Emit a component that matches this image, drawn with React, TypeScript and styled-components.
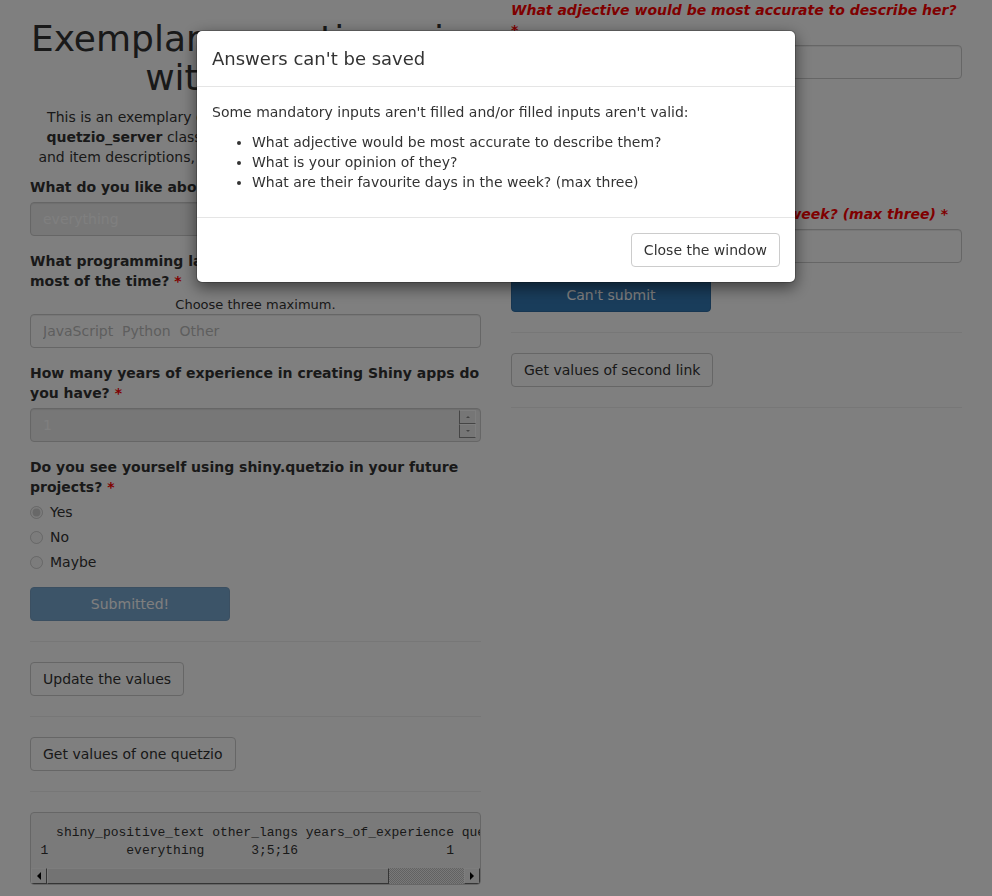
import React from "react";
import styled, { createGlobalStyle } from "styled-components";

const GlobalStyle = createGlobalStyle`
  * { box-sizing: border-box; }
  html, body { margin: 0; padding: 0; overflow: hidden; }
  body {
    font-family: "DejaVu Sans", "Noto Sans", sans-serif;
    font-size: 14px;
    line-height: 1.42857143;
    color: #333;
    background: #fff;
  }
`;

const Page = styled.div`
  display: grid;
  grid-template-columns: 1fr 1fr;
  padding: 0 15px;
`;

const Column = styled.div`
  padding: 0 15px;
  min-width: 0;
`;

const Title = styled.h1`
  margin: 20px 0 10px;
  font-size: 36px;
  font-weight: 500;
  line-height: 38.5px;
  text-align: center;
  color: #333;
`;

const Intro = styled.p`
  margin: 0 0 10px;
  text-align: center;
`;

const FormGroup = styled.div`
  margin-bottom: 15px;
`;

const Label = styled.label<{ $invalid?: boolean }>`
  display: block;
  margin-bottom: 5px;
  font-weight: 700;
  ${(p) => (p.$invalid ? "color: #f00; font-style: italic;" : "color: #333;")}
`;

const Star = styled.span`
  color: #f00;
`;

const Help = styled.div`
  font-size: 13px;
  line-height: 18px;
  text-align: center;
  color: #333;
`;

const TextInput = styled.input<{ $muted?: boolean }>`
  display: block;
  width: 100%;
  height: 34px;
  padding: 6px 12px;
  font-family: inherit;
  font-size: 14px;
  line-height: 1.42857143;
  color: ${(p) => (p.$muted ? "#bdbdbd" : "#555")};
  background: #fff;
  border: 1px solid #ccc;
  border-radius: 4px;
  box-shadow: inset 0 1px 1px rgba(0, 0, 0, 0.075);
  white-space: pre;
  &:disabled {
    background: #eee;
    color: #fff;
    -webkit-text-fill-color: #fff;
    opacity: 1;
  }
`;

const NumberWrap = styled.div`
  position: relative;
`;

const Spinner = styled.div`
  position: absolute;
  right: 5px;
  top: 2px;
  display: flex;
  flex-direction: column;
`;

const SpinButton = styled.div`
  width: 17px;
  height: 14px;
  background: #ededed;
  border: 1px solid;
  border-color: #fdfdfd #fdfdfd #8a8a8a #8a8a8a;
  display: flex;
  align-items: center;
  justify-content: center;
`;

const SpinArrow = styled.span<{ $up?: boolean }>`
  width: 0;
  height: 0;
  border-left: 2px solid transparent;
  border-right: 2px solid transparent;
  ${(p) => (p.$up ? "border-bottom: 2px solid #888;" : "border-top: 2px solid #888;")}
`;

const RadioList = styled.div`
  display: flex;
  flex-direction: column;
  gap: 5px;
`;

const RadioRow = styled.label`
  display: flex;
  align-items: flex-start;
  line-height: 20px;
  font-weight: 400;
  color: #333;
`;

const RadioInput = styled.input`
  width: 13px;
  height: 13px;
  margin: 4px 7px 0 0;
  flex: none;
`;

const Button = styled.button<{ $primary?: boolean; $dim?: boolean; $width?: number }>`
  display: inline-block;
  height: 34px;
  padding: 6px 12px;
  font-family: inherit;
  font-size: 14px;
  line-height: 1.42857143;
  text-align: center;
  white-space: nowrap;
  border: 1px solid;
  border-radius: 4px;
  ${(p) =>
    p.$primary
      ? "color: #fff; background: #337ab7; border-color: #2e6da4;"
      : "color: #333; background: #fff; border-color: #ccc;"}
  ${(p) => (p.$dim ? "opacity: 0.65;" : "")}
  ${(p) => (p.$width ? `width: ${p.$width}px;` : "")}
`;

const Rule = styled.hr`
  margin: 20px 0;
  border: 0;
  border-top: 1px solid #eee;
`;

const OutputBox = styled.div`
  border: 1px solid #ccc;
  border-radius: 4px;
  background: #f5f5f5;
  overflow: hidden;
`;

const OutputText = styled.pre`
  margin: 0;
  padding: 10.5px 9.5px 7px;
  font-family: "Liberation Mono", "DejaVu Sans Mono", monospace;
  font-size: 13px;
  line-height: 1.42857143;
  color: #333;
  white-space: pre;
  overflow: hidden;
`;

const ScrollBar = styled.div`
  display: flex;
  height: 16px;
  background: repeating-conic-gradient(#c4c4c4 0 25%, #f2f2f2 0 50%) 0 0 / 2px 2px;
`;

const ScrollButton = styled.div`
  width: 16px;
  flex: none;
  background: #f0f0f0;
  border: 1px solid;
  border-color: #fbfbfb #6a6a6a #6a6a6a #fbfbfb;
  display: flex;
  align-items: center;
  justify-content: center;
`;

const ScrollThumb = styled.div<{ $w: number }>`
  width: ${(p) => p.$w}px;
  flex: none;
  background: #e6e6e6;
  border: 1px solid;
  border-color: #fbfbfb #6a6a6a #6a6a6a #fbfbfb;
`;

const ScrollSpace = styled.div`
  flex: 1;
`;

const Arrow = styled.span<{ $dir: "left" | "right" }>`
  width: 0;
  height: 0;
  border-top: 4px solid transparent;
  border-bottom: 4px solid transparent;
  ${(p) => (p.$dir === "left" ? "border-right: 4px solid #000;" : "border-left: 4px solid #000;")}
`;

const Backdrop = styled.div`
  position: fixed;
  inset: 0;
  background: rgba(0, 0, 0, 0.5);
  z-index: 1040;
`;

const ModalLayer = styled.div`
  position: fixed;
  inset: 0;
  z-index: 1050;
  overflow: hidden;
`;

const Dialog = styled.div`
  width: 600px;
  margin: 30px auto;
  background: #fff;
  background-clip: padding-box;
  border: 1px solid rgba(0, 0, 0, 0.2);
  border-radius: 6px;
  box-shadow: 0 5px 15px rgba(0, 0, 0, 0.5);
`;

const ModalHeader = styled.div`
  padding: 15px;
  border-bottom: 1px solid #e5e5e5;
`;

const ModalTitle = styled.h4`
  margin: 0;
  font-size: 18px;
  font-weight: 500;
  line-height: 25px;
  color: #333;
`;

const ModalBody = styled.div`
  padding: 15px;
  & p {
    margin: 0 0 10px;
  }
`;

const ModalList = styled.ul`
  margin: 0 0 10px;
  padding-left: 40px;
`;

const ModalFooter = styled.div`
  display: flex;
  justify-content: flex-end;
  padding: 15px;
  border-top: 1px solid #e5e5e5;
`;

const tableText =
  "  shiny_positive_text other_langs years_of_experience quetzio_future\n" +
  "1          everything      3;5;16                   1            Yes";

export default function App() {
  return (
    <>
      <GlobalStyle />
      <Page>
        <Column>
          <Title>
            Exemplary questionnaire
            <br />
            with quetzio
          </Title>
          <Intro>
            This is an exemplary questionnaire created with the help of
            <br />
            <b>quetzio_server</b> class. It presents custom validation, labels
            <br />
            and item descriptions, among other features of the packages.
          </Intro>

          <FormGroup>
            <Label>
              What do you like about Shiny? <Star>*</Star>
            </Label>
            <TextInput disabled value="everything" readOnly />
          </FormGroup>

          <FormGroup>
            <Label>
              What programming languages other than R do you use most of the time? <Star>*</Star>
            </Label>
            <Help>Choose three maximum.</Help>
            <TextInput $muted readOnly value="JavaScript  Python  Other" />
          </FormGroup>

          <FormGroup>
            <Label>
              How many years of experience in creating Shiny apps do you have? <Star>*</Star>
            </Label>
            <NumberWrap>
              <TextInput disabled value="1" readOnly />
              <Spinner>
                <SpinButton>
                  <SpinArrow $up />
                </SpinButton>
                <SpinButton>
                  <SpinArrow />
                </SpinButton>
              </Spinner>
            </NumberWrap>
          </FormGroup>

          <FormGroup>
            <Label>
              Do you see yourself using shiny.quetzio in your future projects? <Star>*</Star>
            </Label>
            <RadioList>
              <RadioRow>
                <RadioInput type="radio" name="future" disabled defaultChecked />
                Yes
              </RadioRow>
              <RadioRow>
                <RadioInput type="radio" name="future" disabled />
                No
              </RadioRow>
              <RadioRow>
                <RadioInput type="radio" name="future" disabled />
                Maybe
              </RadioRow>
            </RadioList>
          </FormGroup>

          <Button $primary $dim $width={200} disabled>
            Submitted!
          </Button>
          <Rule />
          <Button>Update the values</Button>
          <Rule />
          <Button>Get values of one quetzio</Button>
          <Rule />
          <OutputBox>
            <OutputText>{tableText}</OutputText>
            <ScrollBar>
              <ScrollButton>
                <Arrow $dir="left" />
              </ScrollButton>
              <ScrollThumb $w={342} />
              <ScrollSpace />
              <ScrollButton>
                <Arrow $dir="right" />
              </ScrollButton>
            </ScrollBar>
          </OutputBox>
        </Column>

        <Column>
          <FormGroup>
            <Label $invalid>What adjective would be most accurate to describe her? *</Label>
            <TextInput readOnly value="" />
          </FormGroup>

          <FormGroup>
            <Label $invalid>What is your opinion of her? *</Label>
            <RadioList>
              <RadioRow>
                <RadioInput type="radio" name="opinion" />
                Positive
              </RadioRow>
              <RadioRow>
                <RadioInput type="radio" name="opinion" />
                Neutral
              </RadioRow>
              <RadioRow>
                <RadioInput type="radio" name="opinion" />
                Negative
              </RadioRow>
            </RadioList>
          </FormGroup>

          <FormGroup>
            <Label $invalid>What are her favourite days in the week? (max three) *</Label>
            <TextInput readOnly value="" />
          </FormGroup>

          <Button $primary $width={200}>
            Can't submit
          </Button>
          <Rule />
          <Button>Get values of second link</Button>
          <Rule />
        </Column>
      </Page>

      <Backdrop />
      <ModalLayer>
        <Dialog role="dialog">
          <ModalHeader>
            <ModalTitle>Answers can't be saved</ModalTitle>
          </ModalHeader>
          <ModalBody>
            <p>Some mandatory inputs aren't filled and/or filled inputs aren't valid:</p>
            <ModalList>
              <li>What adjective would be most accurate to describe them?</li>
              <li>What is your opinion of they?</li>
              <li>What are their favourite days in the week? (max three)</li>
            </ModalList>
          </ModalBody>
          <ModalFooter>
            <Button>Close the window</Button>
          </ModalFooter>
        </Dialog>
      </ModalLayer>
    </>
  );
}
